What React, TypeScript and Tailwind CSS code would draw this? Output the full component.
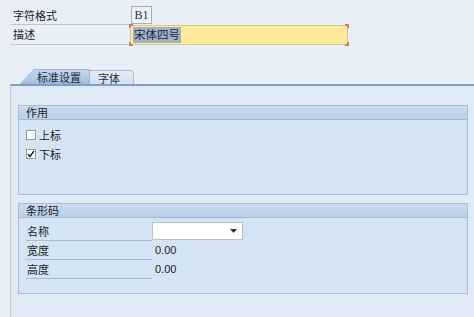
import React from "react";

const font = { fontFamily: '"Noto Sans CJK SC", "Liberation Sans", sans-serif' };

export default function App() {
  return (
    <div
      className="w-[474px] h-[317px] bg-[#e9eff7] overflow-hidden text-[11px] text-[#222] leading-none flex flex-col"
      style={font}
    >
      {/* top form */}
      <div className="pl-[10px] pt-[6px] flex flex-col">
        <div className="flex h-[19px] items-stretch">
          <div className="w-[119px] border-b border-[#b9c6d6] pl-[3px] flex items-center">字符格式</div>
          <div className="ml-[2px] w-[21px] h-[18px] border border-[#9fb0c4] bg-[#eef3f9] flex items-center justify-center text-[12px] text-[#333]" style={{ fontFamily: '"Liberation Serif", serif' }}>
            B1
          </div>
        </div>
        <div className="flex h-[20px] items-stretch">
          <div className="w-[119px] border-b border-[#b9c6d6] pl-[3px] flex items-center">描述</div>
          <div className="relative ml-[1px] w-[218px] h-[20px] bg-[#ffea9c] border border-[#d9c68a] flex items-center pl-[2px]">
            <span className="absolute left-[-2px] top-[-2px] w-[4px] h-[4px] border-l-2 border-t-2 border-[#d07a68]" />
            <span className="absolute left-[-2px] bottom-[-2px] w-[4px] h-[4px] border-l-2 border-b-2 border-[#d07a68]" />
            <span className="absolute right-[-2px] top-[-2px] w-[4px] h-[4px] border-r-2 border-t-2 border-[#d07a68]" />
            <span className="absolute right-[-2px] bottom-[-2px] w-[4px] h-[4px] border-r-2 border-b-2 border-[#d07a68]" />
            <span className="bg-[#9fb3c8] text-[#1d2a3a] px-[1px] h-[16px] flex items-center text-[11.5px]">宋体四号</span>
          </div>
        </div>
      </div>

      {/* tabs */}
      <div className="mt-[24px] h-[15px] pl-[20px] flex items-end relative">
        <div className="relative w-[70px] h-[15px] z-10">
          <div className="absolute inset-0 bg-[#9bb6d8] [clip-path:polygon(14px_0,100%_0,100%_100%,0_100%)]" />
          <div className="absolute inset-[1px] bg-gradient-to-b from-[#c2d5ec] to-[#a9c2e2] [clip-path:polygon(13px_0,100%_0,100%_100%,0_100%)]" />
          <span className="absolute left-[17px] top-[3px] text-[11px] text-[#1f2d3d]">标准设置</span>
        </div>
        <div className="relative w-[45px] h-[14px] -ml-[1px] rounded-tr-[4px] border border-b-0 border-[#a9bdd6] bg-gradient-to-b from-[#e6eef8] to-[#d3e0ef]">
          <span className="absolute left-[8px] top-[2px] text-[11px] text-[#1f2d3d]">字体</span>
        </div>
      </div>

      {/* panel */}
      <div className="ml-[10px] flex-1 border-t-2 border-l border-t-[#809fc6] border-l-[#bfcdde] bg-[#e0eaf5] pt-[19px] pl-[7px] pr-[6px] flex flex-col">
        {/* group 作用 */}
        <div className="h-[90px] border border-[#a9bdd4] bg-[#d4e4f4] flex flex-col">
          <div className="h-[14px] bg-gradient-to-b from-[#cbdcf0] to-[#b9cfe8] border-b border-[#a3b9d3] pl-[7px] flex items-center">作用</div>
          <div className="pl-[7px] pt-[10px] flex flex-col gap-[9px]">
            <div className="flex items-center h-[10px]">
              <span className="w-[10px] h-[10px] bg-white border border-[#8d9db0]" />
              <span className="ml-[3px]">上标</span>
            </div>
            <div className="flex items-center h-[10px]">
              <span className="w-[10px] h-[10px] bg-white border border-[#8d9db0] flex items-center justify-center">
                <svg width="8" height="8" viewBox="0 0 8 8">
                  <path d="M1 4.2 L3 6.5 L7 1" fill="none" stroke="#1a1a1a" strokeWidth="1.4" />
                </svg>
              </span>
              <span className="ml-[3px]">下标</span>
            </div>
          </div>
        </div>

        {/* group 条形码 */}
        <div className="mt-[8px] h-[91px] border border-[#a9bdd4] bg-[#d4e4f4] flex flex-col">
          <div className="h-[14px] bg-gradient-to-b from-[#cbdcf0] to-[#b9cfe8] border-b border-[#a3b9d3] pl-[7px] flex items-center">条形码</div>
          <div className="pl-[7px] pt-[4px] flex flex-col">
            <div className="flex h-[19px] items-stretch">
              <div className="w-[126px] border-b border-[#a9bdd4] pl-[1px] flex items-center">名称</div>
              <div className="w-[91px] h-[18px] bg-white border border-[#b4c3d4] flex items-center justify-end pr-[5px]">
                <svg width="7" height="4" viewBox="0 0 7 4">
                  <path d="M0 0 H7 L3.5 4 Z" fill="#333" />
                </svg>
              </div>
            </div>
            <div className="flex h-[19px] items-stretch">
              <div className="w-[126px] border-b border-[#a9bdd4] pl-[1px] flex items-center">宽度</div>
              <div className="pl-[3px] flex items-center text-[11px]" style={{ fontFamily: '"Liberation Sans", sans-serif' }}>0.00</div>
            </div>
            <div className="flex h-[19px] items-stretch">
              <div className="w-[126px] border-b border-[#a9bdd4] pl-[1px] flex items-center">高度</div>
              <div className="pl-[3px] flex items-center text-[11px]" style={{ fontFamily: '"Liberation Sans", sans-serif' }}>0.00</div>
            </div>
          </div>
        </div>
      </div>
    </div>
  );
}
